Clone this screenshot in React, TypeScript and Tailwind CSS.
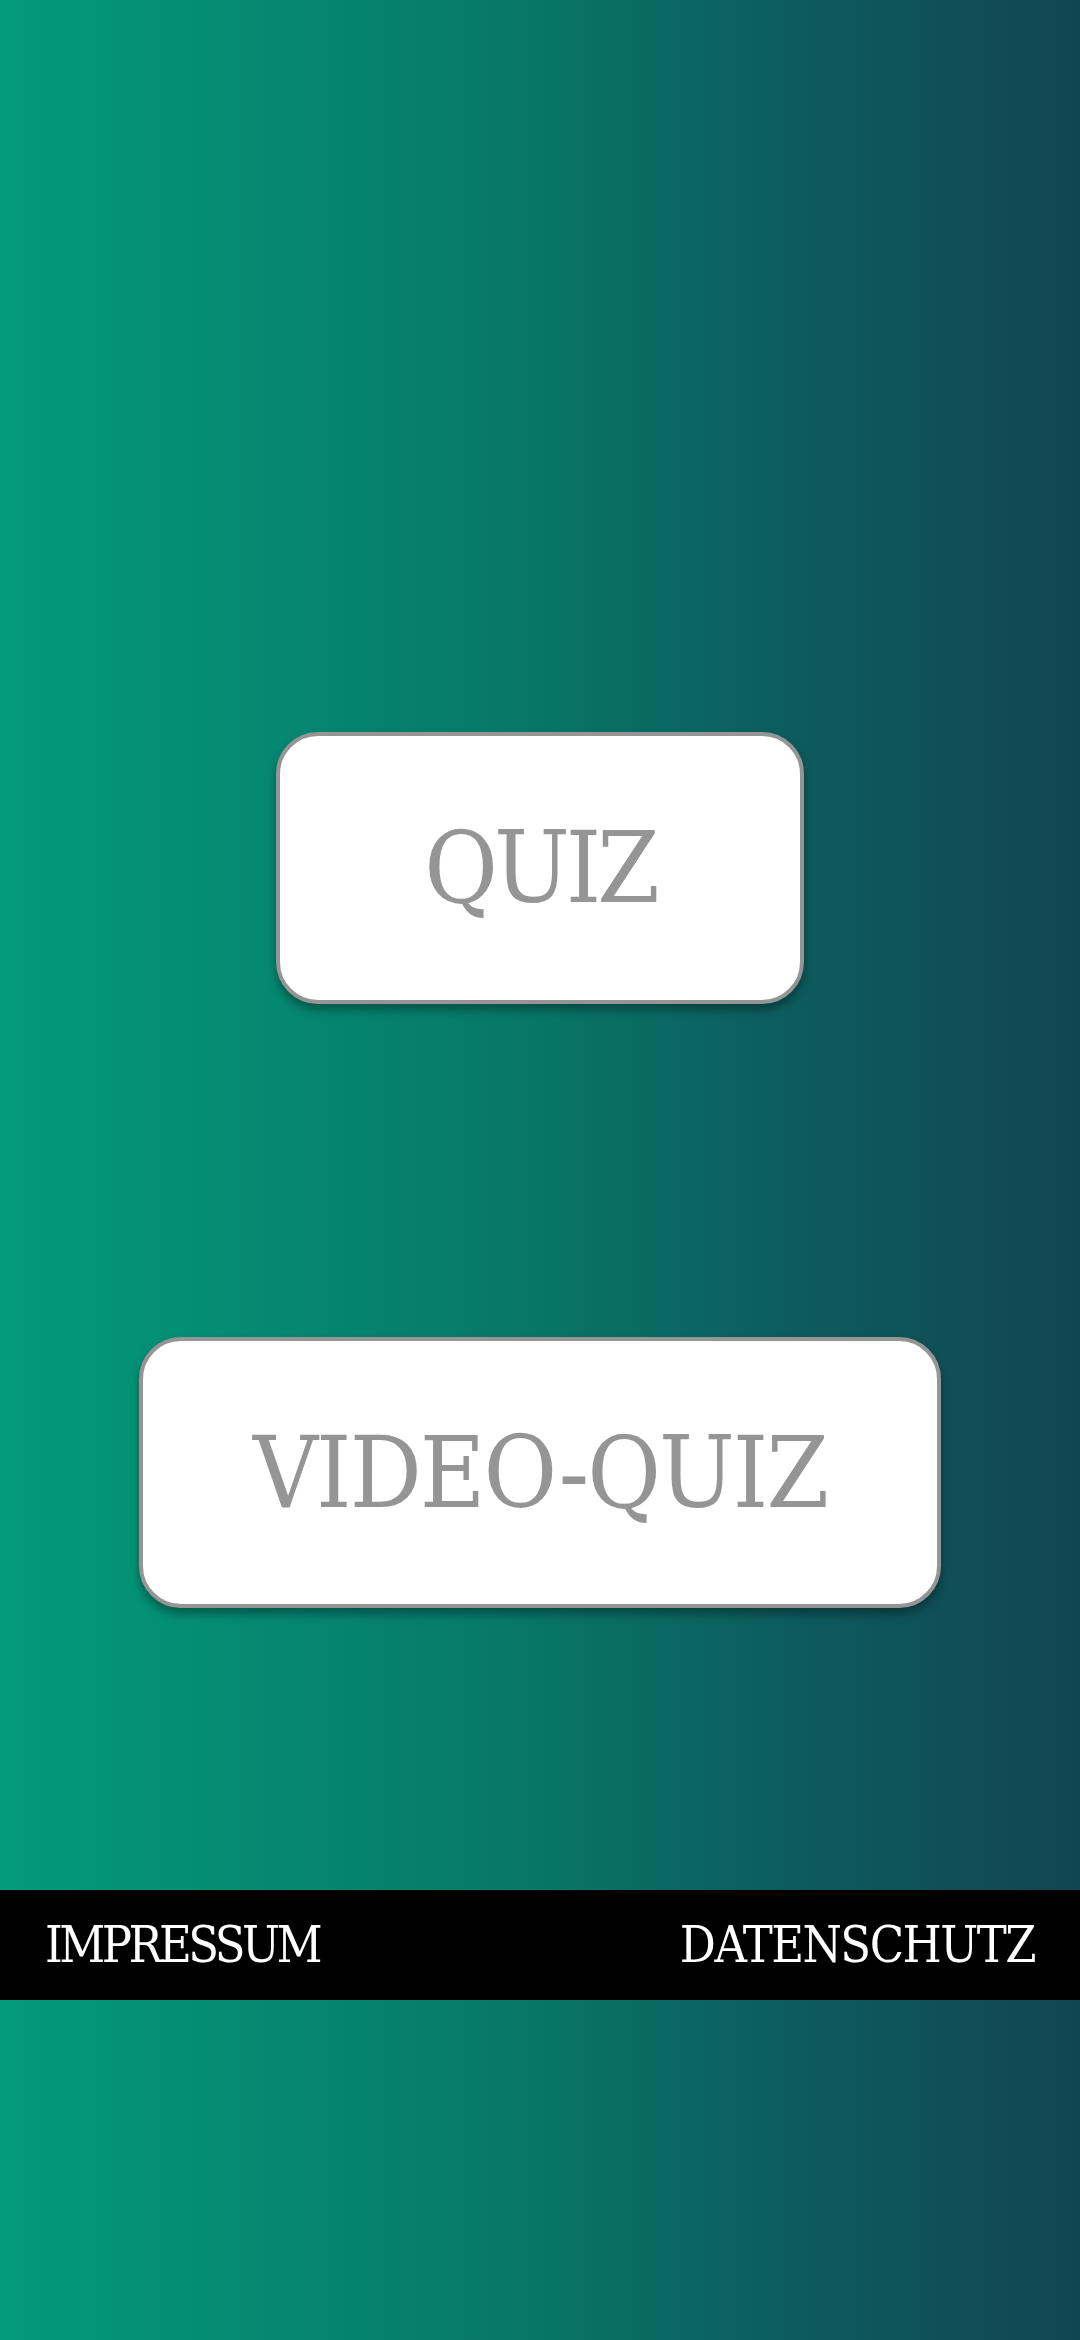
import React from "react";

export default function App() {
  const font = { fontFamily: '"DejaVu Serif", "Liberation Serif", serif' };
  return (
    <div
      className="w-[1080px] h-[2340px] flex flex-col items-center bg-[linear-gradient(to_right,#039a7b,#077a6a_45%,#0d5a5c_75%,#12464f)]"
      style={font}
    >
      <div className="h-[732px] shrink-0" />
      <button className="w-[528px] h-[272px] shrink-0 bg-white border-[4px] border-[#959595] rounded-[42px] shadow-[0_6px_10px_rgba(0,0,0,0.35)] flex items-center justify-center">
        <span className="text-[#959595] text-[100px] leading-none tracking-[-4px] [font-stretch:condensed]">QUIZ</span>
      </button>
      <div className="h-[333px] shrink-0" />
      <button className="w-[802px] h-[271px] shrink-0 bg-white border-[4px] border-[#959595] rounded-[42px] shadow-[0_6px_10px_rgba(0,0,0,0.35)] flex items-center justify-center">
        <span className="text-[#959595] text-[100px] leading-none tracking-[-2px] [font-stretch:condensed]">VIDEO-QUIZ</span>
      </button>
      <div className="h-[282px] shrink-0" />
      <div className="w-full h-[110px] shrink-0 bg-black flex items-center justify-between px-[45px]">
        <span className="text-white text-[50px] leading-none tracking-[-3.5px] [font-stretch:condensed]">IMPRESSUM</span>
        <span className="text-white text-[50px] leading-none tracking-[-1.5px] [font-stretch:condensed]">DATENSCHUTZ</span>
      </div>
    </div>
  );
}
